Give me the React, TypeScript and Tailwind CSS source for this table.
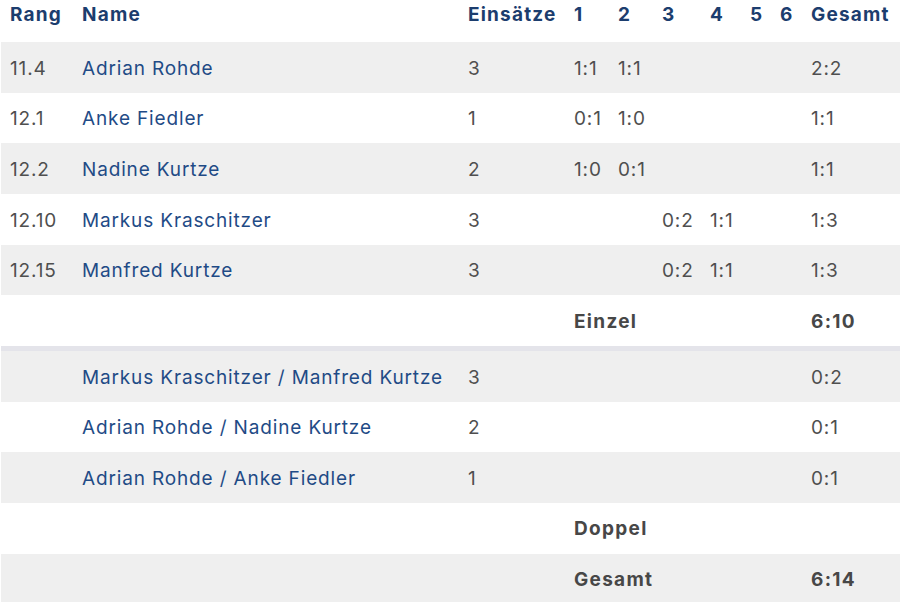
const einzel = [
  { rang: '11.4', name: 'Adrian Rohde', einsaetze: '3', sets: ['1:1', '1:1', '', '', '', ''], total: '2:2' },
  { rang: '12.1', name: 'Anke Fiedler', einsaetze: '1', sets: ['0:1', '1:0', '', '', '', ''], total: '1:1' },
  { rang: '12.2', name: 'Nadine Kurtze', einsaetze: '2', sets: ['1:0', '0:1', '', '', '', ''], total: '1:1' },
  { rang: '12.10', name: 'Markus Kraschitzer', einsaetze: '3', sets: ['', '', '0:2', '1:1', '', ''], total: '1:3' },
  { rang: '12.15', name: 'Manfred Kurtze', einsaetze: '3', sets: ['', '', '0:2', '1:1', '', ''], total: '1:3' },
]

const doppel = [
  { name: 'Markus Kraschitzer / Manfred Kurtze', einsaetze: '3', total: '0:2' },
  { name: 'Adrian Rohde / Nadine Kurtze', einsaetze: '2', total: '0:1' },
  { name: 'Adrian Rohde / Anke Fiedler', einsaetze: '1', total: '0:1' },
]

const widths = [72, 386, 106, 44, 44, 48, 40, 30, 31, 98]

const td = 'pl-[9px] pr-0 pt-[3px] whitespace-nowrap'

export default function App() {
  return (
    <div
      className="w-[900px] h-[602px] overflow-hidden bg-white pl-px text-[19px] tracking-[0.85px] text-[#4f4f4f]"
      style={{ fontFamily: 'Inter, "Liberation Sans", sans-serif' }}
    >
      <table className="w-[899px] table-fixed border-collapse">
        <colgroup>
          {widths.map((w, i) => (
            <col key={i} style={{ width: w }} />
          ))}
        </colgroup>
        <thead>
          <tr className="h-[42px] text-left align-top font-bold tracking-[1.2px] text-[#1c3d6e]">
            <th className="pl-[9px] pt-px">Rang</th>
            <th className="pl-[9px] pt-px">Name</th>
            <th className="pl-[9px] pt-px">Einsätze</th>
            <th className="pl-[9px] pt-px">1</th>
            <th className="pl-[9px] pt-px">2</th>
            <th className="pl-[9px] pt-px">3</th>
            <th className="pl-[9px] pt-px">4</th>
            <th className="pl-[9px] pt-px">5</th>
            <th className="pl-[9px] pt-px">6</th>
            <th className="pl-[9px] pt-px whitespace-nowrap">Gesamt</th>
          </tr>
        </thead>
        <tbody>
          {einzel.map((r, i) => (
            <tr key={r.rang} className={`h-[50.67px] ${i % 2 === 0 ? 'bg-[#efefef]' : 'bg-white'}`}>
              <td className={td}>{r.rang}</td>
              <td className={`${td} text-[#1f4b86]`}>{r.name}</td>
              <td className={td}>{r.einsaetze}</td>
              {r.sets.map((s, j) => (
                <td key={j} className={td}>{s}</td>
              ))}
              <td className={td}>{r.total}</td>
            </tr>
          ))}
          <tr className="h-[50.67px] bg-white font-bold tracking-[1.3px] text-[#474747]">
            <td colSpan={3}></td>
            <td colSpan={6} className={td}>Einzel</td>
            <td className={td}>6:10</td>
          </tr>
          <tr className="h-[5px] bg-[#e4e4ea]">
            <td colSpan={10}></td>
          </tr>
          {doppel.map((r, i) => (
            <tr key={r.name} className={`h-[50.67px] ${i % 2 === 0 ? 'bg-[#efefef]' : 'bg-white'}`}>
              <td className={td}></td>
              <td className={`${td} text-[#1f4b86]`}>{r.name}</td>
              <td className={td}>{r.einsaetze}</td>
              <td colSpan={6}></td>
              <td className={td}>{r.total}</td>
            </tr>
          ))}
          <tr className="h-[50.67px] bg-white font-bold tracking-[1.3px] text-[#474747]">
            <td colSpan={3}></td>
            <td colSpan={6} className={td}>Doppel</td>
            <td className={td}></td>
          </tr>
          <tr className="h-[50.67px] bg-[#efefef] font-bold tracking-[1.3px] text-[#474747]">
            <td colSpan={3}></td>
            <td colSpan={6} className={td}>Gesamt</td>
            <td className={td}>6:14</td>
          </tr>
        </tbody>
      </table>
    </div>
  )
}
